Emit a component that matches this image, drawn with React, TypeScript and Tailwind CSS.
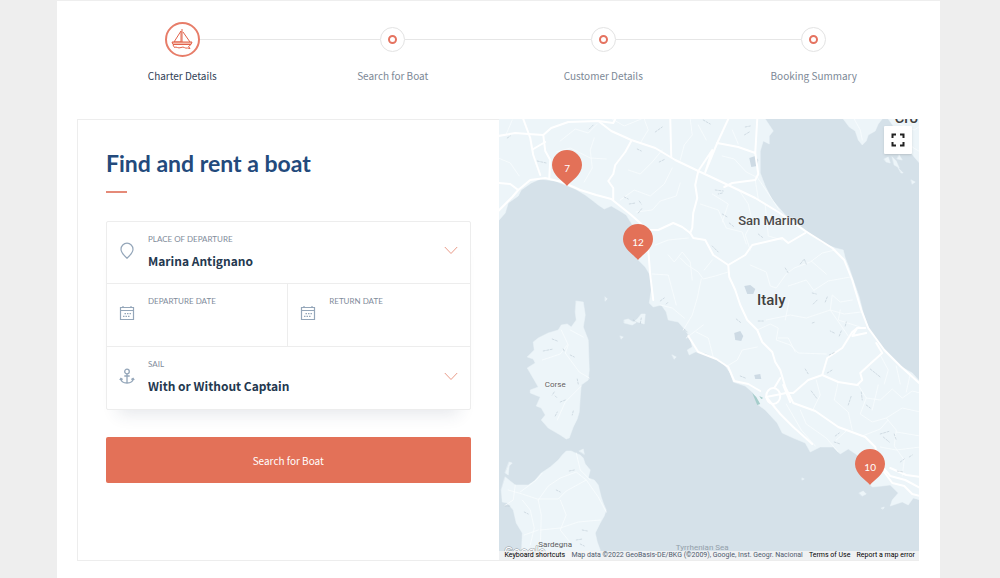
import React, { useState } from 'react';

const STEPS = ['Charter Details', 'Search for Boat', 'Customer Details', 'Booking Summary'];

const MAP = { x: 498, y: 119, width: 422, height: 441 };

const PINS = [
  { count: 7, x: 567, y: 186 },
  { count: 12, x: 638, y: 260 },
  { count: 10, x: 871, y: 485 }
];

const LAND = [
  // mainland
  'M498 119L765 119L773 131L769 136L769 144L763 141L760 151L760 173L765 186L772 200L785 215L805 230L822 243L835 248L843 250L845 258L849 268L853 280L859 297L863 313L868 328L877 342L888 353L898 365L912 373L920 382L920 500L913 498L908 505L902 502L890 506L892 500L898 493L890 485L882 486L872 487L863 477L857 455L848 449L840 454L833 447L820 447L810 452L805 443L793 438L782 433L777 423L765 410L758 405L753 393L745 386L733 382L730 373L723 363L713 357L705 353L695 352L689 355L687 350L692 347L690 338L685 330L678 322L668 320L666 312L661 305L653 307L649 303L651 290L651 277L645 267L638 260L635 231L631 223L626 215L618 210L611 206L604 209L598 205L593 201L585 195L575 189L565 185L555 181L540 179L531 183L521 190L518 196L508 203L505 213L498 221Z',
  // istria and dalmatia
  'M843 119L849 127L855 131L858 140L862 145L866 141L868 135L875 131L878 124L882 119Z',
  'M888 119L893 126L897 134L903 142L908 149L914 157L920 164L920 119Z',
  'M884 159L888 157L890 163L886 162ZM892 157L896 161L899 168L894 165ZM899 155L902 160L897 159ZM898 168L903 173L901 173ZM911 180L915 182L912 184Z',
  // corsica
  'M576 301L583 302L585 315L583 327L588 340L589 370L588 380L581 385L580 397L579 412L577 419L573 427L569 438L566 439L560 435L548 428L541 420L545 415L541 408L536 406L540 397L530 393L530 390L538 387L534 380L527 368L535 363L533 359L527 357L530 354L534 350L533 342L538 338L548 333L558 330L561 325L567 324L571 327L576 320L575 312Z',
  // sardinia
  'M505 477L515 485L528 485L534 481L541 473L550 467L558 460L562 455L566 451L571 451L575 453L580 455L583 458L585 464L590 470L588 478L594 480L598 485L601 497L603 503L606 510L604 516L600 523L595 533L597 542L600 550L598 560L521 560L522 533L516 523L513 510L507 503L502 502L501 490Z',
  'M509 462L512 463L509 466L508 475L505 473ZM579 451L583 449L584 454Z',
  // small islands
  'M624 320L628 319L633 322L637 319L641 314L645 314L644 324L637 322L632 325L624 323ZM605 297L607 299L605 301ZM620 336L623 337L621 339ZM672 355L676 357L674 359ZM859 493L863 491L866 494L862 496ZM881 508L884 507L883 509ZM802 478L804 479L802 480Z'
];

const MAIN_ROADS = [
  'M498 136L515 133L528 134L543 135L551 128L568 122L598 121L611 131L631 140L655 148L675 160L698 171L713 178L732 187L755 198L778 212L805 231L832 248L844 260L852 280L861 310L868 328L884 350L900 366L920 384',
  'M598 121L613 123L615 119',
  'M523 119L530 138L533 155L540 175',
  'M543 135L545 151L550 160L549 178',
  'M533 149L545 142',
  'M670 119L671 157',
  'M698 171L712 150L705 172L717 143L728 119',
  'M717 143L738 147L755 153L757 119',
  'M755 153L758 174L755 180L732 183L724 187',
  'M631 141L625 152L615 165L613 174L608 181L613 188L613 200',
  'M498 183L510 184L518 190L530 180L545 178L562 182L580 190L596 195L611 199L631 215L640 223L646 230L658 230L673 223L682 227L690 233L693 238L705 240L713 255L728 265L729 277L735 290L740 305L747 320L757 330L762 342L772 352L775 362L780 370L785 387L793 403L815 411L838 427L865 437L875 447L879 463L890 476L905 480L920 488',
  'M498 211L512 197L518 190',
  'M698 171L695 185L697 198L693 213L692 228L690 233',
  'M646 230L648 250L650 275L653 300',
  'M785 393L793 393L808 380L822 375L827 358L842 348L852 332L857 328L865 328',
  'M857 328L852 336L866 333',
  'M822 375L838 382L857 385L862 380L860 373L872 362L882 353L876 343',
  'M760 391L748 384L734 381L728 367L716 359L698 352L688 336',
  'M780 378L774 388',
  'M766 397L780 414L793 427L812 444',
  'M884 472L892 483L904 486L912 494L920 496M890 468L906 475L920 477',
  'M728 265L745 255L752 245L782 238L788 243L805 233'
];

const MINOR_ROADS = [
  'M498 158L510 163L519 176M512 120L506 134M560 141L575 129L588 133L597 124M556 152L570 148L590 158L606 159',
  'M584 182L592 168L590 150L594 138M628 170L640 174L652 162L662 150M620 200L634 190L650 196L664 184L672 168',
  'M636 212L652 210L660 201L676 196L680 183M655 245L668 240L688 238M668 255L674 262L682 252L690 262L692 280',
  'M612 119L624 126L641 119M640 143L648 130L644 119M680 160L684 145L692 135L690 119M698 125L706 140',
  'M732 130L738 144M722 156L734 159L746 172L756 177M755 180L758 199M756 176L765 189L779 210M712 194L728 204L722 222',
  'M738 189L748 204L752 222L745 235L750 250M700 204L718 210L726 228L742 232L746 244M765 205L768 236L782 240M750 265L766 272L770 286L776 288L786 274L794 268L810 262L822 253L835 250',
  'M728 272L715 276L703 279L698 272L687 265L680 258M701 279L697 298L692 315L683 330M703 325L686 338M704 270L712 260',
  'M652 274L668 275L672 290L676 305M660 305L672 308L684 318M713 357L708 338L696 332',
  'M757 330L770 324L778 328L776 340L790 345M757 347L742 350L737 360L727 366M766 320L790 315L806 318L830 310L844 314L861 312',
  'M789 300L785 320M790 345L798 353L826 354M778 338L788 338L795 352M814 291L806 280L788 286M814 290L828 281L850 277M811 261L826 274',
  'M858 385L866 398L880 400L892 389L902 398L912 391L920 393M838 382L834 400L848 412L852 430M880 355L888 370L884 384M896 366L900 384M910 374L906 392M866 398L860 414L872 422L886 418L896 430L894 446L904 460M812 411L820 395L816 380',
  'M862 436L880 429L888 420M786 404L801 430L815 446M800 410L806 424L826 438L838 452M847 430L836 440M886 418L902 408L920 412M896 432L920 436M880 447L896 450L920 447M904 460L902 476M878 385L872 410',
  'M561 330L568 345L565 353L579 372L589 378M570 330L583 337M542 360L560 354L567 345M581 386L565 402L557 420',
  'M508 490L522 494L537 499L558 499L566 491L586 480L598 497L606 512M515 485L513 500L504 506M538 500L541 515L540 550M522 500L530 510L534 528L530 545M538 500L548 486L560 478L576 472L586 480M576 453L580 470L590 480M540 530L560 528L578 522L600 520M560 500L566 515L560 530L572 545M524 535L538 530M520 492L536 480L542 473',
  'M854 119L860 130L862 140M900 124L914 130L920 126M902 133L912 147L920 152M860 327L838 320L840 310M852 300L840 302L832 295L830 310L848 336'
];

const LAKES = [
  'M749 158L755 156L758 160L757 166L751 167Z',
  'M744 286L750 285L755 289L753 294L747 294Z',
  'M734 333L740 331L743 336L741 341L735 340Z',
  'M754 375L760 374L761 379L755 379Z'
];

const RELIEF = [
  'M655 132L662 127M589 129L593 125M507 138L510 136M537 161L546 163M637 149L641 151M659 162L665 159M624 197L628 199M629 204L635 203M638 213L642 208M639 201L641 204M703 120L710 124',
  'M745 127L750 126M749 132L744 135M715 190L723 191M722 193L718 194M722 214L727 217M729 223L734 227M758 234L763 238M712 246L718 252M800 264L804 259L806 264M785 268L788 273',
  'M812 293L816 294M813 304L817 300M825 302L827 297M812 323L815 322M839 336L841 331M845 326L846 322M834 333L830 331M829 355L835 352M805 369L808 374M811 391L817 399M827 373L832 370M848 405L851 396M861 392L862 400M866 405L870 408M740 376L745 378M736 319L741 323M758 321L763 321',
  'M660 301L664 298M666 304L668 302M684 329L687 332M633 320L636 322M641 318L640 324M570 355L574 357M563 349L564 351M552 339L557 341M543 351L553 349M577 379L578 384M554 392L552 395M555 396L557 398M560 402L565 400M573 411L572 415M555 416L557 412',
  'M556 490L560 492M569 471L574 470M524 512L528 514M504 506L510 506M576 540L582 539M580 544L584 546M582 530L587 531M835 436L839 433M834 442L840 444M880 434L890 431M883 437L889 442M894 434L896 440M900 462L904 459M897 471L903 472M909 457L912 455M870 369L880 377'
];

const ShipIcon = () => (
  <svg viewBox="0 0 24 24" className="size-6" fill="none" stroke="#e1624b" strokeWidth="1" aria-hidden="true">
    <path d="M12 2V15M11 4L4 15H11ZM13 5L20 15" strokeLinejoin="round" />
    <path d="M2 15H22L21 17.500H3Z" fill="#f6bcae" />
    <path d="M3 18L4.500 20.500C6.500 19 8 22 11 20.500S15 22 17.500 21L20 21.500M21 17.500L18.500 19.500L20 21.500" />
  </svg>
);

const PlaceIcon = () => (
  <svg viewBox="0 0 16 18" className="h-[18px] w-4" fill="none" stroke="#94a6b9" strokeWidth="1.200" aria-hidden="true">
    <path d="M8 16.300C5 13.500 2 10.300 2 7.200A6 6 0 0 1 14 7.200C14 10.300 11 13.500 8 16.300Z" />
  </svg>
);

const CalendarIcon = () => (
  <svg viewBox="0 0 16 16" className="size-4" fill="none" stroke="#94a6b9" strokeWidth="1.200" aria-hidden="true">
    <path d="M1.500 2.500H14.500V14.500H1.500ZM1.500 5.500H14.500M4 1V3M12 1V3" />
    <path d="M5.500 8.700H7M8 8.700H9.500M10.500 8.700H12M4 11.400H5.500M6.500 11.400H8M9 11.400H10.500" />
  </svg>
);

const AnchorIcon = () => (
  <svg viewBox="0 0 16 17" className="h-[17px] w-4" fill="none" stroke="#94a6b9" strokeWidth="1.300" aria-hidden="true">
    <circle cx="8" cy="3.500" r="2.300" />
    <path d="M8 6V15.300M5.300 8H10.700M1.800 10.500C2.300 16.500 13.700 16.500 14.200 10.500M.8 12L1.900 10.300L3.700 11.500M12.300 11.500L14.100 10.300L15.200 12" />
  </svg>
);

const ChevronIcon = () => (
  <svg viewBox="0 0 14 9" className="pointer-events-none h-[9px] w-[14px]" fill="none" stroke="#e99a88" aria-hidden="true">
    <path d="M.8 1L7 7.500L13.200 1" />
  </svg>
);

interface SelectFieldProps {
  id: string;
  label: string;
  options: string[];
  icon: React.ReactNode;
}

const SelectField: React.FC<SelectFieldProps> = ({ id, label, options, icon }) => {
  const [value, setValue] = useState(options[0]);

  return (
    <div className="flex h-[62px] items-center px-3">
      <span className="flex w-[29px] shrink-0 pb-1">{icon}</span>
      <div className="min-w-0 flex-1">
        <label htmlFor={id} className="block font-[Lato,sans-serif] text-[8px] leading-3 text-[#7f8c9b] uppercase">
          {label}
        </label>
        <select
          id={id}
          value={value}
          onChange={(e) => setValue(e.target.value)}
          className="mt-1 block h-6 w-full appearance-none bg-transparent text-xs font-bold text-[#24384f] outline-none"
        >
          {options.map((o) => (
            <option key={o}>{o}</option>
          ))}
        </select>
      </div>
      <span className="pb-1">
        <ChevronIcon />
      </span>
    </div>
  );
};

const DateField: React.FC<{ id: string; label: string }> = ({ id, label }) => {
  const [value, setValue] = useState('');

  return (
    <div className="flex h-[62px] items-center px-3">
      <span className="flex w-[29px] shrink-0 pb-1">
        <CalendarIcon />
      </span>
      <div className="min-w-0 flex-1">
        <label htmlFor={id} className="block font-[Lato,sans-serif] text-[8px] leading-3 text-[#7f8c9b] uppercase">
          {label}
        </label>
        <input
          id={id}
          type="text"
          value={value}
          onChange={(e) => setValue(e.target.value)}
          className="mt-1 block h-6 w-full bg-transparent text-xs font-bold text-[#24384f] outline-none"
        />
      </div>
    </div>
  );
};

const Steps = () => (
  <ol className="grid grid-cols-4">
    {STEPS.map((step, i) => (
      <li key={step} className="flex flex-col items-center">
        <div className="flex h-9 w-full items-center">
          <span className={i === 0 ? 'flex-1' : 'h-px flex-1 bg-[#e6e6e6]'} />
          {i === 0 ? (
            <span className="flex size-[35px] items-center justify-center rounded-full border-2 border-[#e77d69]">
              <ShipIcon />
            </span>
          ) : (
            <span className="flex size-[25px] items-center justify-center rounded-full border border-[#e3e3e3]">
              <span className="size-[9px] rounded-full border-2 border-[#e57360]" />
            </span>
          )}
          <span className={i === STEPS.length - 1 ? 'flex-1' : 'h-px flex-1 bg-[#e6e6e6]'} />
        </div>
        <span className={i === 0 ? 'mt-[11px] text-[10px] leading-4 text-[#2f4056]' : 'mt-[11px] text-[10px] leading-4 text-[#7c8896]'}>
          {step}
        </span>
      </li>
    ))}
  </ol>
);

const BoatMap = () => (
  <section aria-label="Map" className="relative min-h-[441px] overflow-hidden bg-[#d5e1e9] font-[Roboto,sans-serif]">
    <svg
      viewBox={`${MAP.x} ${MAP.y} ${MAP.width} ${MAP.height}`}
      preserveAspectRatio="xMidYMid slice"
      className="absolute inset-0 h-full w-full"
      fill="none"
      strokeLinecap="round"
      strokeLinejoin="round"
    >
      {LAND.map((d) => (
        <path key={d} d={d} fill="#edf5f9" stroke="#edf5f9" strokeWidth=".5" />
      ))}
      {LAKES.map((d) => (
        <path key={d} d={d} fill="#cddae4" />
      ))}
      {MINOR_ROADS.map((d) => (
        <path key={d} d={d} stroke="#f9fcfe" strokeWidth=".8" />
      ))}
      {MAIN_ROADS.map((d) => (
        <path key={d} d={d} stroke="#fff" strokeWidth="2" />
      ))}
      <ellipse cx="773" cy="396" rx="7" ry="8" stroke="#fff" strokeWidth="2" />
      <path d="M766 397L786 393M783 385L790 402" stroke="#fff" strokeWidth="2" />
      {RELIEF.map((d) => (
        <path key={d} d={d} stroke="#bccad3" strokeWidth=".6" strokeDasharray="2 1.500" />
      ))}
      <path d="M752 393L756 397L760 404L757 405ZM759 396L763 398L761 399Z" fill="#a5cdcb" />
      <g textAnchor="middle" stroke="#fff" strokeOpacity=".6" strokeWidth="1" paintOrder="stroke">
        <text x="771" y="225" fontSize="13" fontWeight="500" fill="#4a4a4a">San Marino</text>
        <text x="771" y="305" fontSize="15" fontWeight="500" fill="#404040">Italy</text>
        <text x="555" y="387" fontSize="8" fill="#5c5c5c">Corse</text>
        <text x="906" y="123" fontSize="15" fontWeight="500" fill="#404040">Cro</text>
        <text x="702" y="550" fontSize="8" fill="#93a0aa" stroke="none">Tyrrhenian Sea</text>
      </g>
      <text x="504" y="556" fontSize="13" fill="#fff" stroke="#8d969c" strokeWidth="1" paintOrder="stroke">Google</text>
      <text x="555" y="547" fontSize="8" fill="#5c5c5c" textAnchor="middle">Sardegna</text>
    </svg>

    {PINS.map((pin) => (
      <button
        key={pin.count}
        type="button"
        aria-label={`${pin.count} boats`}
        className="absolute h-9 w-[30px] -translate-x-1/2 -translate-y-full"
        style={{
          left: `${((pin.x - MAP.x) / MAP.width) * 100}%`,
          top: `${((pin.y - MAP.y) / MAP.height) * 100}%`
        }}
      >
        <svg viewBox="0 0 30 36" className="absolute inset-0 h-full w-full" aria-hidden="true">
          <path d="M15 36C11 31 0 25 0 15A15 15 0 0 1 30 15C30 25 19 31 15 36Z" fill="#e37158" />
        </svg>
        <span className="relative flex h-[30px] items-center justify-center font-[Lato,sans-serif] text-[10px] text-white">
          {pin.count}
        </span>
      </button>
    ))}

    <button
      type="button"
      aria-label="Toggle fullscreen view"
      className="absolute top-[7px] right-[7px] flex size-7 items-center justify-center rounded-[1px] bg-white shadow"
    >
      <svg viewBox="0 0 14 14" className="size-[14px]" fill="none" stroke="#222" strokeWidth="2" aria-hidden="true">
        <path d="M1.500 5V1.500H5M9 1.500H12.500V5M12.500 9V12.500H9M5 12.500H1.500V9" />
      </svg>
    </button>

    <footer className="absolute inset-x-0 bottom-0 flex h-[9px] items-center justify-between bg-[#f5f5f5]/80 pr-1 pl-[6px] text-[7px] leading-[9px] whitespace-nowrap text-black">
      <button type="button">Keyboard shortcuts</button>
      <span className="text-[#4e5b6e]">Map data ©2022 GeoBasis-DE/BKG (©2009), Google, Inst. Geogr. Nacional</span>
      <a href="#terms">Terms of Use</a>
      <a href="#report">Report a map error</a>
    </footer>
  </section>
);

export default function App() {
  return (
    <div className="min-h-screen bg-[#eee] pt-px pr-[60px] pl-[57px] font-['Noto_Sans_CJK_SC',sans-serif]">
      <main className="min-h-[577px] bg-white pt-5 pr-[21px] pb-[17px] pl-5">
        <Steps />

        <div className="mt-[35px] grid grid-cols-2 border-b border-l border-[#ededed]">
          <section className="border-t border-[#ededed] px-7 pt-[27px]">
            <h1 className="font-[Lato,sans-serif] text-[23px] leading-8 font-bold text-[#234a7c]">Find and rent a boat</h1>
            <div className="mt-3 h-[2px] w-[21px] bg-[#e58a78]" />

            <form onSubmit={(e) => e.preventDefault()}>
              <div className="mt-7 divide-y divide-[#ededed] rounded-[2px] border border-[#ededed] bg-white shadow-[0_16px_16px_-12px_rgba(40,60,90,0.12)]">
                <SelectField
                  id="departure-place"
                  label="Place of departure"
                  options={['Marina Antignano']}
                  icon={<PlaceIcon />}
                />
                <div className="grid grid-cols-2 divide-x divide-[#ededed]">
                  <DateField id="departure-date" label="Departure date" />
                  <DateField id="return-date" label="Return date" />
                </div>
                <SelectField
                  id="sail"
                  label="Sail"
                  options={['With or Without Captain']}
                  icon={<AnchorIcon />}
                />
              </div>

              <button type="submit" className="mt-[27px] h-[46px] w-full rounded-[2px] bg-[#e37158] text-[10px] text-white">
                Search for Boat
              </button>
            </form>
          </section>

          <BoatMap />
        </div>
      </main>
    </div>
  );
}
